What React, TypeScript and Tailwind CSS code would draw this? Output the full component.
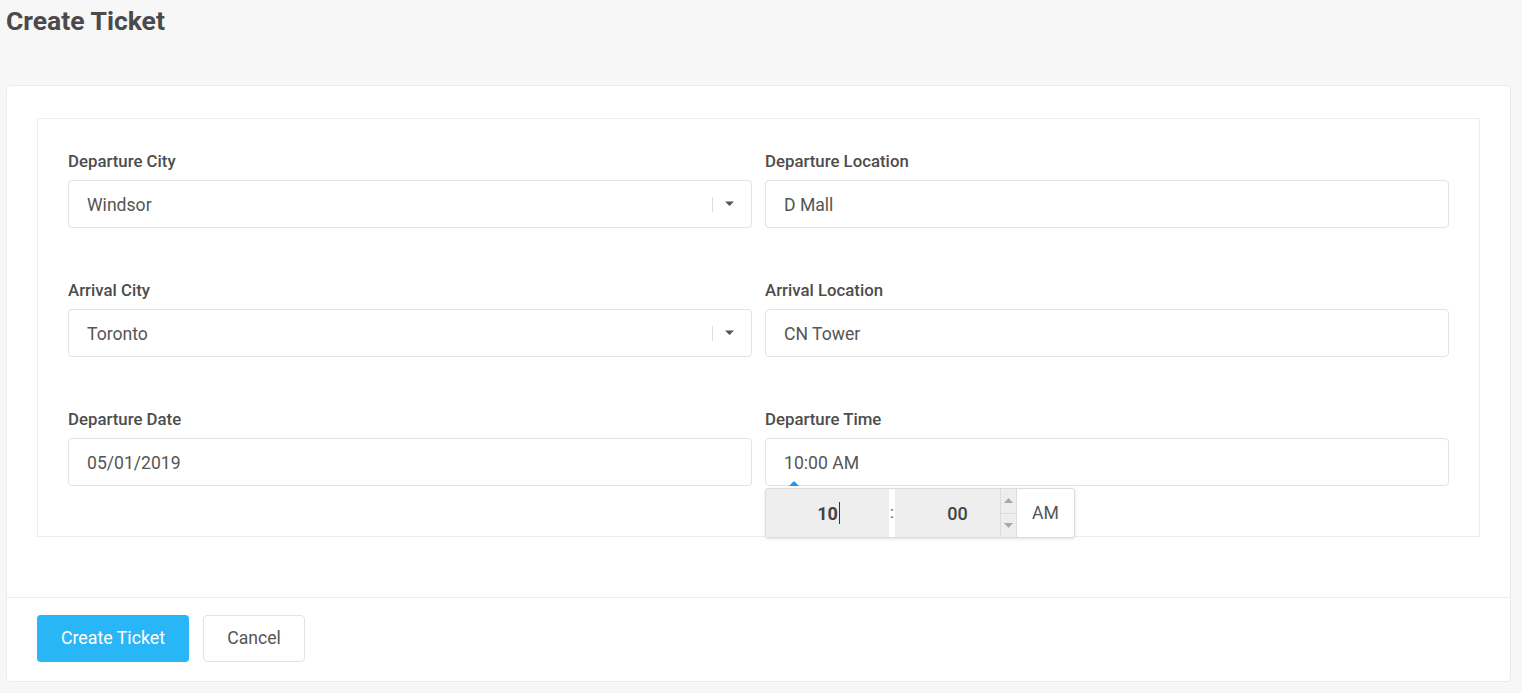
import React from "react";

function Caret() {
  return (
    <svg width="9" height="6" viewBox="0 0 9 6" className="shrink-0">
      <path d="M0 0.5 L9 0.5 L4.5 5 Z" fill="#555" />
    </svg>
  );
}

function Label({ children }: { children: React.ReactNode }) {
  return (
    <div className="text-[16.8px] leading-[20px] font-medium text-[#4d4d4d] mb-[9px]">{children}</div>
  );
}

function TextBox({ value }: { value: string }) {
  return (
    <div className="h-[48px] border border-[#e3e3e3] rounded-[4px] bg-white flex items-center px-[18px] pt-[2px] text-[17.6px] text-[#555]">
      {value}
    </div>
  );
}

function SelectBox({ value }: { value: string }) {
  return (
    <div className="h-[48px] border border-[#e3e3e3] rounded-[4px] bg-white flex items-center pl-[18px] pr-[17px] text-[17.6px] text-[#555]">
      <span className="flex-1 pt-[2px]">{value}</span>
      <span className="w-px h-[15px] bg-[#ddd] mr-[12px]" />
      <Caret />
    </div>
  );
}

export default function App() {
  return (
    <div
      className="min-h-[693px] bg-[#f7f7f7] pt-[6px] pl-[6px] pr-[11px] pb-[11px]"
      style={{ fontFamily: "Roboto, 'Liberation Sans', sans-serif" }}
    >
      <h1 className="text-[26.5px] leading-[30px] font-bold text-[#4a4a4a] m-0">Create Ticket</h1>
      <div className="mt-[49px] bg-white border border-[#ebebeb] rounded-[4px]">
        <div className="px-[30px] pt-[32px] pb-[60px]">
          <div className="border border-[#ececec] px-[30px] pt-[32px] pb-[50px]">
            <div className="grid grid-cols-2 gap-x-[13px] gap-y-[52px]">
              <div>
                <Label>Departure City</Label>
                <SelectBox value="Windsor" />
              </div>
              <div>
                <Label>Departure Location</Label>
                <TextBox value="D Mall" />
              </div>
              <div>
                <Label>Arrival City</Label>
                <SelectBox value="Toronto" />
              </div>
              <div>
                <Label>Arrival Location</Label>
                <TextBox value="CN Tower" />
              </div>
              <div>
                <Label>Departure Date</Label>
                <TextBox value="05/01/2019" />
              </div>
              <div className="relative">
                <Label>Departure Time</Label>
                <TextBox value="10:00 AM" />
                <div className="absolute left-[24px] top-[72px] w-0 h-0 border-l-[5px] border-r-[5px] border-b-[5px] border-l-transparent border-r-transparent border-b-[#2196f3]" />
                <div className="absolute left-0 top-[79px] w-[310px] h-[50px] bg-white border border-[#dcdcdc] rounded-[3px] shadow-[0_1px_3px_rgba(0,0,0,0.12)] flex text-[#555]">
                  <div className="w-[123px] bg-[#eeeeee] flex items-center justify-center text-[18px] font-bold text-[#444]">
                    <span className="pl-[2px]">10</span>
                    <span className="w-px h-[22px] bg-[#333] ml-px" />
                  </div>
                  <div className="w-[6px] flex items-center justify-center text-[16px] text-[#555]">:</div>
                  <div className="w-[105px] bg-[#eeeeee] flex items-center justify-center pl-[20px] text-[18px] font-medium text-[#444]">00</div>
                  <div className="w-[17px] flex flex-col bg-[#eeeeee] border-l border-[#dcdcdc] border-r">
                    <div className="flex-1 flex items-center justify-center border-b border-[#dcdcdc]">
                      <svg width="9" height="5" viewBox="0 0 9 5"><path d="M0 5 L9 5 L4.5 0 Z" fill="#a9a9a9" /></svg>
                    </div>
                    <div className="flex-1 flex items-center justify-center">
                      <svg width="9" height="5" viewBox="0 0 9 5"><path d="M0 0 L9 0 L4.5 5 Z" fill="#a9a9a9" /></svg>
                    </div>
                  </div>
                  <div className="flex-1 flex items-center justify-center text-[17.6px] text-[#555]">AM</div>
                </div>
              </div>
            </div>
          </div>
        </div>
        <div className="border-t border-[#ececec] px-[30px] pt-[17px] pb-[19px] flex gap-[14px]">
          <button className="h-[47px] w-[152px] rounded-[4px] bg-[#29b6f6] text-white text-[17.8px]">
            Create Ticket
          </button>
          <button className="h-[47px] w-[102px] rounded-[4px] bg-white border border-[#e3e3e3] text-[#555] text-[17.6px]">
            Cancel
          </button>
        </div>
      </div>
    </div>
  );
}
